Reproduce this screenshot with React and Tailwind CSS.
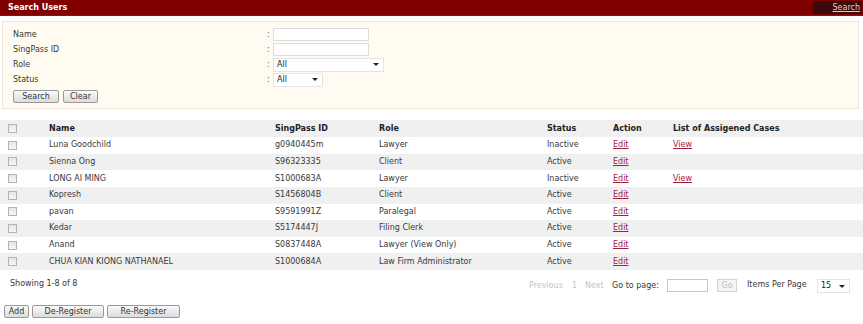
import React from "react";

const rows = [
  ["Luna Goodchild", "g0940445m", "Lawyer", "Inactive", true],
  ["Sienna Ong", "S96323335", "Client", "Active", false],
  ["LONG AI MING", "S1000683A", "Lawyer", "Inactive", true],
  ["Kopresh", "S1456804B", "Client", "Active", false],
  ["pavan", "S9591991Z", "Paralegal", "Active", false],
  ["Kedar", "S5174447J", "Filing Clerk", "Active", false],
  ["Anand", "S0837448A", "Lawyer (View Only)", "Active", false],
  ["CHUA KIAN KIONG NATHANAEL", "S1000684A", "Law Firm Administrator", "Active", false],
];

function Check() {
  return (
    <span className="block w-[9px] h-[9px] border border-[#b4b4b4] bg-gradient-to-b from-[#e6e6e6] to-[#f6f6f6]" />
  );
}

function Btn({ children, className = "" }) {
  return (
    <span
      className={
        "flex items-center justify-center h-[13px] border border-[#9a9a9a] rounded-[2px] bg-gradient-to-b from-[#fafafa] to-[#dcdcdc] text-[#333] leading-none " +
        className
      }
    >
      {children}
    </span>
  );
}

function Sel({ value, className = "" }) {
  return (
    <span
      className={
        "flex items-center justify-between h-[14px] bg-white border border-[#e4e4e4] pl-[3px] pr-[4px] text-[#222] " +
        className
      }
    >
      <span>{value}</span>
      <span className="w-0 h-0 border-l-[3px] border-r-[3px] border-t-[3px] border-l-transparent border-r-transparent border-t-[#222]" />
    </span>
  );
}

export default function App() {
  return (
    <div
      className="w-[863px] h-[324px] bg-white text-[8px] text-[#383838] leading-none overflow-hidden"
      style={{ fontFamily: '"DejaVu Sans", Verdana, sans-serif' }}
    >
      {/* Title bar */}
      <div className="h-[16px] bg-[#800000] flex items-center justify-between border-b border-[#8c1010]">
        <span className="pl-[8px] font-bold text-white">Search Users</span>
        <span className="h-[13px] w-[49px] mr-[1px] bg-[#3b0a0a] flex items-center justify-end pr-[2px] text-[#f1c9c9] underline">
          Search
        </span>
      </div>

      {/* Search panel */}
      <div className="ml-[2px] mt-[5px] w-[857px] h-[88px] border border-[#efe4da] bg-[#fffbf0] pl-[10px] pt-[5px]">
        {[
          ["Name", "input"],
          ["SingPass ID", "input"],
          ["Role", "role"],
          ["Status", "status"],
        ].map(([label, kind]) => (
          <div key={label} className="flex items-center h-[15px]">
            <span className="w-[254px]">{label}</span>
            <span className="w-[6px] text-[#555]">:</span>
            {kind === "input" && (
              <span className="block w-[96px] h-[13px] bg-white border border-[#dcdcdc]" />
            )}
            {kind === "role" && <Sel value="All" className="w-[111px]" />}
            {kind === "status" && <Sel value="All" className="w-[50px]" />}
          </div>
        ))}
        <div className="flex gap-[4px] mt-[3px]">
          <Btn className="w-[46px]">Search</Btn>
          <Btn className="w-[35px]">Clear</Btn>
        </div>
      </div>

      {/* Table */}
      <div className="mt-[11px] w-[863px]">
        <div className="flex items-center h-[17px] bg-[#f0f0f0] font-bold text-[#222]">
          <span className="w-[49px] pl-[8px]">
            <Check />
          </span>
          <span className="w-[226px]">Name</span>
          <span className="w-[104px]">SingPass ID</span>
          <span className="w-[168px]">Role</span>
          <span className="w-[66px]">Status</span>
          <span className="w-[60px]">Action</span>
          <span>List of Assigened Cases</span>
        </div>
        {rows.map(([name, id, role, status, view], i) => (
          <div
            key={name}
            className={
              "flex items-center h-[16.625px] " + (i % 2 === 1 ? "bg-[#f0f0f0]" : "bg-white")
            }
          >
            <span className="w-[49px] pl-[8px]">
              <Check />
            </span>
            <span className="w-[226px]">{name}</span>
            <span className="w-[104px]">{id}</span>
            <span className="w-[168px]">{role}</span>
            <span className="w-[66px]">{status}</span>
            <span className="w-[60px] text-[#a3203c] underline">Edit</span>
            {view && <span className="text-[#a3203c] underline">View</span>}
          </div>
        ))}
      </div>

      {/* Footer */}
      <div className="flex items-center h-[23px] mt-[4px]">
        <span className="pl-[10px] w-[529px] pb-[3px]">Showing 1-8 of 8</span>
        <span className="text-[#c4c4c4] w-[43px]">Previous</span>
        <span className="text-[#c4c4c4] w-[13px]">1</span>
        <span className="text-[#c4c4c4] w-[27px]">Next</span>
        <span className="w-[55px]">Go to page:</span>
        <span className="block w-[41px] h-[13px] bg-white border border-[#c8c8c8]" />
        <span className="ml-[9px] flex items-center justify-center w-[20px] h-[13px] border border-[#d4d4d4] bg-[#f4f4f4] text-[#bbb]">
          Go
        </span>
        <span className="ml-[10px] w-[70px] pb-[1px]">Items Per Page</span>
        <Sel value="15" className="w-[33px] mt-[1px]" />
      </div>

      <div className="flex gap-[3px] ml-[4px] mt-[8px]">
        <Btn className="w-[25px]">Add</Btn>
        <Btn className="w-[72px]">De-Register</Btn>
        <Btn className="w-[73px]">Re-Register</Btn>
      </div>
    </div>
  );
}
